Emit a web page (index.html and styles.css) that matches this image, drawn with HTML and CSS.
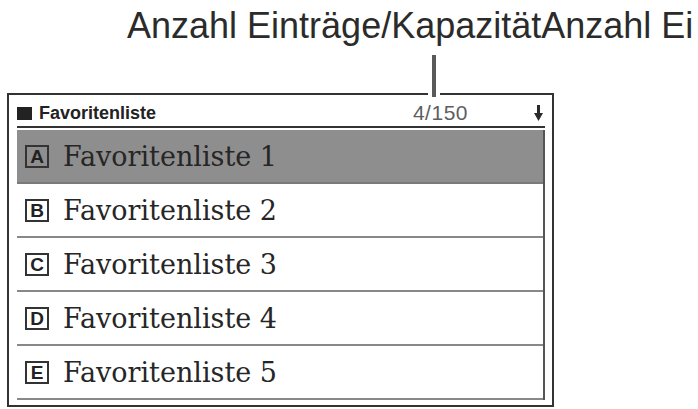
FILE: index.html
```html
<!DOCTYPE html>
<html lang="de">
<head>
<meta charset="utf-8">
<title>Favoritenliste</title>
<link rel="stylesheet" href="styles.css">
</head>
<body>
<div class="page">
  <div class="caption">Anzahl Einträge/KapazitätAnzahl Ei</div>
  <div class="leader"></div>
  <section class="panel">
    <header class="panel-head">
      <span class="head-mark"></span>
      <span class="head-title">Favoritenliste</span>
      <span class="head-count">4/150</span>
      <svg class="head-arrow" width="9" height="16" viewBox="0 0 9 16">
        <rect x="3" y="0" width="3" height="10" fill="#2a2a2a"/>
        <path d="M0 8 L9 8 L4.5 16 Z" fill="#2a2a2a"/>
      </svg>
    </header>
    <ul class="list">
      <li class="row row-active"><span class="key">A</span><span class="name">Favoritenliste 1</span></li>
      <li class="row"><span class="key">B</span><span class="name">Favoritenliste 2</span></li>
      <li class="row"><span class="key">C</span><span class="name">Favoritenliste 3</span></li>
      <li class="row"><span class="key">D</span><span class="name">Favoritenliste 4</span></li>
      <li class="row"><span class="key">E</span><span class="name">Favoritenliste 5</span></li>
    </ul>
  </section>
</div>
</body>
</html>
```

FILE: styles.css
```css
html, body {
  margin: 0;
  padding: 0;
  background: #fff;
}

.page {
  position: relative;
  width: 698px;
  height: 409px;
  overflow: hidden;
}

/* annotation above the screen */
.caption {
  margin-top: 8px;
  padding-left: 127px;
  font-family: "Liberation Sans", Arial, sans-serif;
  font-size: 36px;
  line-height: 36px;
  color: #2b2b2b;
  white-space: nowrap;
}

/* leader line from the caption down to the counter; white sides cut the frame */
.leader {
  position: absolute;
  left: 428px;
  top: 55px;
  width: 4px;
  height: 42px;
  background: #5a5a5a;
  border-left: 4px solid #fff;
  border-right: 4px solid #fff;
}

.panel {
  box-sizing: border-box;
  margin: 49px 0 0 7px;
  width: 547px;
  height: 314px;
  border: 2px solid #333;
  padding: 0 7px 0 8px;
}

.panel-head {
  box-sizing: border-box;
  display: flex;
  align-items: center;
  height: 33px;
  padding-top: 5px;
  border-bottom: 2px solid #333;
}

.head-mark {
  width: 15px;
  height: 13px;
  background: #222;
  margin-right: 7px;
}

.head-title {
  font-family: "Liberation Sans", Arial, sans-serif;
  font-weight: bold;
  font-size: 18px;
  color: #222;
}

.head-count {
  margin-left: auto;
  margin-right: 66px;
  font-family: "Liberation Sans", Arial, sans-serif;
  font-size: 21px;
  color: #5e5e5e;
  letter-spacing: 0.5px;
}

.head-arrow {
  display: block;
  margin-right: 2px;
}

.list {
  list-style: none;
  margin: 2px 0 0;
  padding: 0;
  border-right: 2px solid #555;
}

.row {
  box-sizing: border-box;
  display: flex;
  align-items: center;
  height: 54px;
  padding-left: 8px;
  border-bottom: 2px solid #888;
}

.row-active {
  background: #8e8e8e;
  border-bottom-color: #7a7a7a;
}

.key {
  box-sizing: border-box;
  display: flex;
  align-items: center;
  justify-content: center;
  width: 24px;
  height: 23px;
  margin-right: 14px;
  border: 2px solid #333;
  font-family: "Liberation Sans", Arial, sans-serif;
  font-weight: bold;
  font-size: 19px;
  line-height: 1;
  color: #222;
}

.name {
  font-family: "DejaVu Serif", "Liberation Serif", serif;
  font-size: 27px;
  color: #262626;
}
```
